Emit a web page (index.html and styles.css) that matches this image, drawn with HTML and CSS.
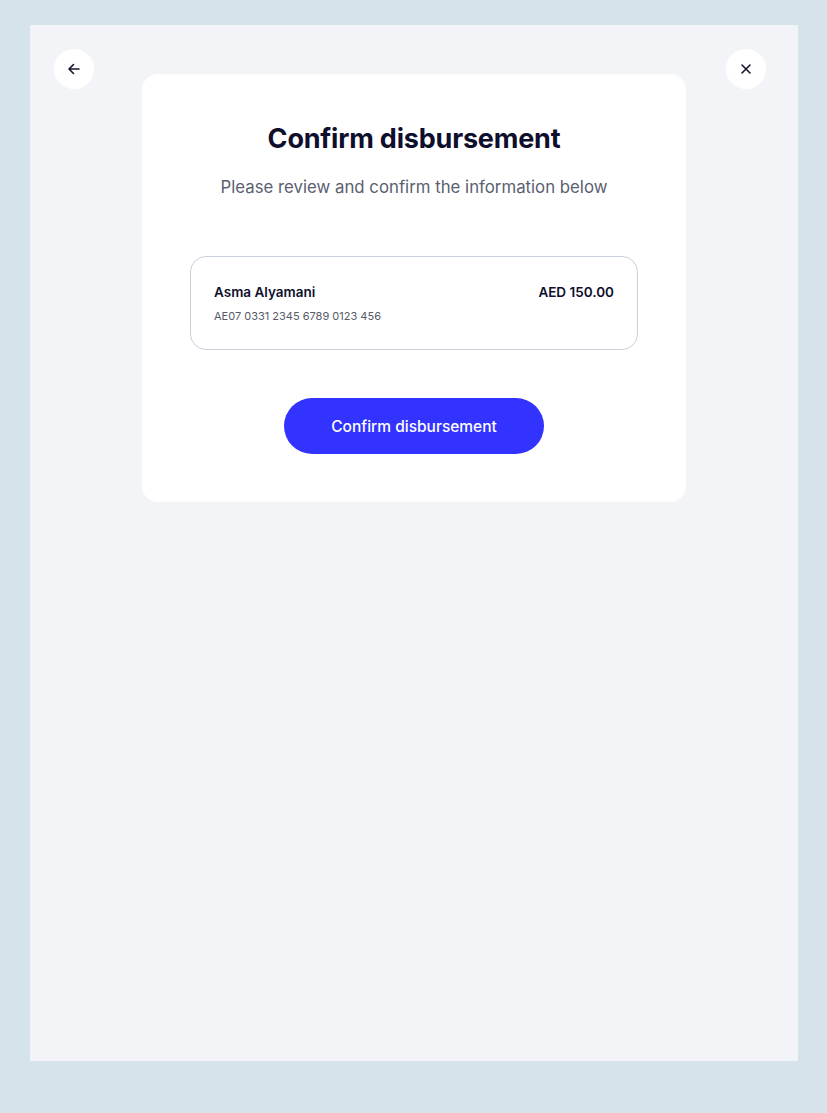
FILE: index.html
```html
<!DOCTYPE html>
<html lang="en">
<head>
    <meta charset="UTF-8">
    <meta name="viewport" content="width=device-width, initial-scale=1.0">
    <title>Confirm disbursement</title>
    <link rel="stylesheet" href="styles.css">
</head>
<body>
    <div class="panel">
        <button class="icon-btn back-btn" aria-label="Back">
            <svg width="16" height="16" viewBox="0 0 16 16" fill="none">
                <path d="M13 8H3M7.5 3.5L3 8l4.5 4.5" stroke="#14142b" stroke-width="1.6" stroke-linecap="round" stroke-linejoin="round"/>
            </svg>
        </button>

        <div class="confirm-card">
            <h2>Confirm disbursement</h2>
            <p class="subtitle">Please review and confirm the information below</p>

            <div class="payee-box">
                <div class="payee-row">
                    <span class="payee-name">Asma Alyamani</span>
                    <span class="payee-amount">AED 150.00</span>
                </div>
                <div class="payee-iban">AE07 0331 2345 6789 0123 456</div>
            </div>

            <button class="confirm-btn">Confirm disbursement</button>
        </div>

        <button class="icon-btn close-btn" aria-label="Close">
            <svg width="16" height="16" viewBox="0 0 16 16" fill="none">
                <path d="M4 4l8 8M12 4l-8 8" stroke="#14142b" stroke-width="1.6" stroke-linecap="round"/>
            </svg>
        </button>
    </div>
</body>
</html>
```

FILE: styles.css
```css
body {
    font-family: "Inter", "Liberation Sans", sans-serif;
    background-color: #d7e3eb;
    margin: 0;
    padding: 25px 29px 52px 30px;
}
.panel {
    background-color: #f3f4f8;
    width: 768px;
    height: 1036px;
    box-sizing: border-box;
    padding: 24px;
    display: grid;
    grid-template-columns: 1fr 544px 1fr;
    align-items: start;
}
.icon-btn {
    width: 40px;
    height: 40px;
    border: none;
    border-radius: 50%;
    background-color: #ffffff;
    display: flex;
    align-items: center;
    justify-content: center;
    padding: 0;
    cursor: pointer;
}
.back-btn {
    justify-self: start;
}
.close-btn {
    justify-self: end;
    margin-right: 8px;
}
.confirm-card {
    margin-top: 25px;
    background-color: #ffffff;
    border-radius: 16px;
    padding: 49px 48px 48px;
    text-align: center;
}
.confirm-card h2 {
    margin: 0;
    font-size: 27px;
    line-height: 32px;
    font-weight: 700;
    color: #0e0f2c;
    letter-spacing: -0.2px;
}
.subtitle {
    margin: 20px 0 0;
    font-size: 16.8px;
    line-height: 24px;
    color: #5a6070;
}
.payee-box {
    margin-top: 57px;
    border: 1px solid #c9d1dc;
    border-radius: 16px;
    padding: 24px 23px;
    text-align: left;
}
.payee-row {
    display: flex;
    justify-content: space-between;
    align-items: center;
}
.payee-name,
.payee-amount {
    font-size: 13.5px;
    line-height: 22px;
    font-weight: 600;
    color: #0e0f2c;
}
.payee-iban {
    margin-top: 4px;
    font-size: 11px;
    line-height: 18px;
    color: #565b68;
}
.confirm-btn {
    margin-top: 48px;
    width: 260px;
    height: 56px;
    border: none;
    border-radius: 28px;
    background-color: #3333ff;
    color: #ffffff;
    font-family: inherit;
    font-size: 15.5px;
    font-weight: 500;
    cursor: pointer;
}
```
